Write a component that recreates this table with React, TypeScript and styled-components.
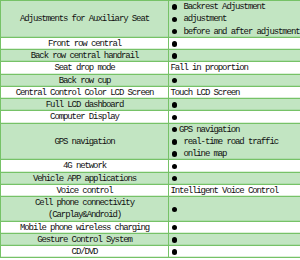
import React from 'react';
import styled, { createGlobalStyle } from 'styled-components';

type Line = { dot?: 'spaced' | 'tight'; text?: string };

interface RowData {
  label: string[];
  value: Line[];
}

const rows: RowData[] = [
  {
    label: ['Adjustments for Auxiliary Seat'],
    value: [
      { dot: 'spaced', text: 'Backrest Adjustment' },
      { dot: 'spaced', text: 'adjustment' },
      { dot: 'spaced', text: 'before and after adjustment' },
    ],
  },
  { label: ['Front row central'], value: [{ dot: 'spaced' }] },
  { label: ['Back row central handrail'], value: [{ dot: 'spaced' }] },
  { label: ['Seat drop mode'], value: [{ text: 'Fall in proportion' }] },
  { label: ['Back row cup'], value: [{ dot: 'spaced' }] },
  { label: ['Central Control Color LCD Screen'], value: [{ text: 'Touch LCD Screen' }] },
  { label: ['Full LCD dashboard'], value: [{ dot: 'spaced' }] },
  { label: ['Computer Display'], value: [{ dot: 'spaced' }] },
  {
    label: ['GPS navigation'],
    value: [
      { dot: 'tight', text: 'GPS navigation' },
      { dot: 'spaced', text: 'real-time road traffic' },
      { dot: 'spaced', text: 'online map' },
    ],
  },
  { label: ['4G network'], value: [{ dot: 'spaced' }] },
  { label: ['Vehicle APP applications'], value: [{ dot: 'spaced' }] },
  { label: ['Voice control'], value: [{ text: 'Intelligent Voice Control' }] },
  {
    label: ['Cell phone connectivity', '(Carplay&Android)'],
    value: [{ dot: 'spaced' }],
  },
  { label: ['Mobile phone wireless charging'], value: [{ dot: 'spaced' }] },
  { label: ['Gesture Control System'], value: [{ dot: 'spaced' }] },
  { label: ['CD/DVD'], value: [{ dot: 'spaced' }] },
];

export default function App() {
  return (
    <>
      <GlobalStyle />
      <Sheet>
        {rows.map((row, i) => (
          <Row key={i} $shaded={i % 2 === 0}>
            <LabelCell>
              {row.label.map((l) => (
                <TextLine key={l}>{l}</TextLine>
              ))}
            </LabelCell>
            <ValueCell>
              {row.value.map((line, j) => (
                <ValueLine key={j}>
                  {line.dot && (
                    <Bullet>
                      <Dot />
                    </Bullet>
                  )}
                  {line.dot === 'spaced' && line.text && <Gap />}
                  {line.text}
                </ValueLine>
              ))}
            </ValueCell>
          </Row>
        ))}
      </Sheet>
    </>
  );
}

const GlobalStyle = createGlobalStyle`
  html, body {
    margin: 0;
    padding: 0;
    background: #ffffff;
    overflow: hidden;
  }
  body {
    width: 300px;
    height: 260px;
  }
`;

const Sheet = styled.div`
  width: 300px;
  overflow: hidden;
  border-left: 1px solid #76c267;
  border-top: 1px solid #76c267;
  font-family: 'Liberation Mono', monospace;
  font-size: 9px;
  letter-spacing: -1.1px;
  line-height: 12.25px;
  color: #111111;
`;

const Row = styled.div<{ $shaded: boolean }>`
  display: grid;
  grid-template-columns: 168px 1fr;
  background: ${(p) => (p.$shaded ? '#c2e5c2' : '#ffffff')};
  box-shadow: inset 0 -1.2px 0 #76c267;
`;

const LabelCell = styled.div`
  display: flex;
  flex-direction: column;
  justify-content: center;
  align-items: center;
  border-right: 1.5px solid #76c267;
  white-space: nowrap;
`;

const TextLine = styled.div`
  height: 12.25px;
`;

const ValueCell = styled.div`
  display: flex;
  flex-direction: column;
  justify-content: center;
  padding-left: 1.5px;
  white-space: nowrap;
`;

const ValueLine = styled.div`
  display: flex;
  align-items: center;
  height: 12.25px;
`;

const Bullet = styled.span`
  display: inline-flex;
  align-items: center;
  width: 8.6px;
  height: 100%;
  padding-left: 1px;
  box-sizing: border-box;
`;

const Dot = styled.span`
  width: 5.4px;
  height: 5.4px;
  border-radius: 50%;
  background: #000000;
`;

const Gap = styled.span`
  display: inline-block;
  width: 4.3px;
`;
